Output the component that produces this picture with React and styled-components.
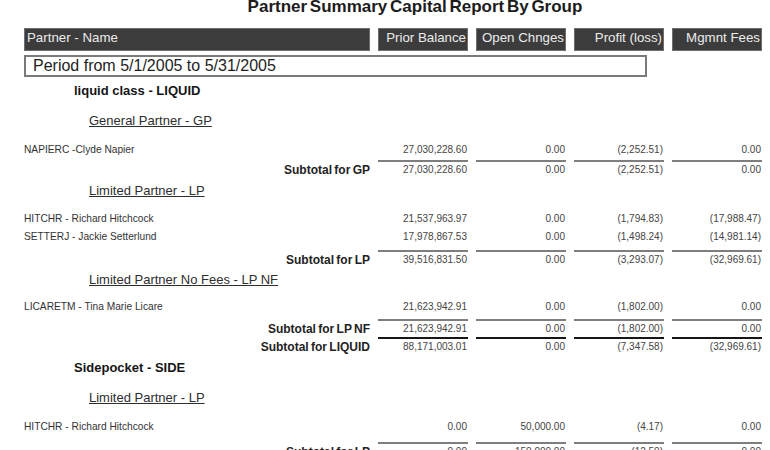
import React from "react";
import styled, { createGlobalStyle } from "styled-components";

const GlobalStyle = createGlobalStyle`
  body {
    margin: 0;
    background: #ffffff;
    font-family: "Liberation Sans", Arial, sans-serif;
  }
`;

const columns = ["Prior Balance", "Open Chnges", "Profit (loss)", "Mgmnt Fees"];

// report lines, heights in px so the rows land where the printed report puts them
const rows = [
  { type: "class", text: "liquid class - LIQUID", h: 32 },
  { type: "group", text: "General Partner - GP", h: 31 },
  { type: "detail", name: "NAPIERC -Clyde Napier", values: ["27,030,228.60", "0.00", "(2,252.51)", "0.00"], h: 20 },
  { type: "sub", label: "Subtotal for GP", values: ["27,030,228.60", "0.00", "(2,252.51)", "0.00"], h: 19 },
  { type: "group", text: "Limited Partner - LP", h: 30 },
  { type: "detail", name: "HITCHR - Richard Hitchcock", values: ["21,537,963.97", "0.00", "(1,794.83)", "(17,988.47)"], h: 18 },
  { type: "detail", name: "SETTERJ - Jackie Setterlund", values: ["17,978,867.53", "0.00", "(1,498.24)", "(14,981.14)"], h: 23 },
  { type: "sub", label: "Subtotal for LP", values: ["39,516,831.50", "0.00", "(3,293.07)", "(32,969.61)"], h: 18 },
  { type: "group", text: "Limited Partner No Fees - LP NF", h: 29 },
  { type: "detail", name: "LICARETM - Tina Marie Licare", values: ["21,623,942.91", "0.00", "(1,802.00)", "0.00"], h: 22 },
  { type: "sub", label: "Subtotal for LP NF", values: ["21,623,942.91", "0.00", "(1,802.00)", "0.00"], h: 18 },
  { type: "sub", label: "Subtotal for LIQUID", values: ["88,171,003.01", "0.00", "(7,347.58)", "(32,969.61)"], h: 17, dark: true },
  { type: "class", text: "Sidepocket - SIDE", h: 32 },
  { type: "group", text: "Limited Partner - LP", h: 31 },
  { type: "detail", name: "HITCHR - Richard Hitchcock", values: ["0.00", "50,000.00", "(4.17)", "0.00"], h: 25 },
  { type: "sub", label: "Subtotal for LP", values: ["0.00", "150,000.00", "(12.50)", "0.00"], h: 18 },
];

function App() {
  return (
    <>
      <GlobalStyle />
      <Page>
        <Title>Partner Summary Capital Report By Group</Title>
        <Row $h={23}>
          <HeadCell $left>Partner - Name</HeadCell>
          {columns.map((c) => (
            <HeadCell key={c}>{c}</HeadCell>
          ))}
        </Row>
        <Period>Period from 5/1/2005 to 5/31/2005</Period>

        {rows.map((r, i) => {
          if (r.type === "class") return <ClassLine key={i} $h={r.h}>{r.text}</ClassLine>;
          if (r.type === "group") return <GroupLine key={i} $h={r.h}><span>{r.text}</span></GroupLine>;
          if (r.type === "detail")
            return (
              <Row key={i} $h={r.h}>
                <Name>{r.name}</Name>
                {r.values.map((v, j) => (
                  <Num key={j}>{v}</Num>
                ))}
              </Row>
            );
          return (
            <Row key={i} $h={r.h}>
              <SubLabel>{r.label}</SubLabel>
              {r.values.map((v, j) => (
                <SubNum key={j} $dark={r.dark}>{v}</SubNum>
              ))}
            </Row>
          );
        })}
      </Page>
    </>
  );
}

const Page = styled.div`
  width: 770px;
  height: 450px;
  overflow: hidden;
  background: #ffffff;
`;

const Title = styled.h1`
  margin: -2px 0 0;
  padding-left: 60px;
  height: 30px;
  font-size: 17px;
  line-height: 17px;
  font-weight: bold;
  text-align: center;
  color: #1c1c1c;
  word-spacing: -2px;
`;

const Row = styled.div`
  display: grid;
  grid-template-columns: 346px repeat(4, 90px);
  column-gap: 8px;
  padding-left: 24px;
  height: ${(p) => p.$h}px;
`;

const HeadCell = styled.div`
  box-sizing: border-box;
  height: 23px;
  background: #3c3c3c;
  border: 1px solid #6f6f6f;
  color: #ececec;
  font-size: 13.3px;
  line-height: 18px;
  white-space: nowrap;
  overflow: hidden;
  text-align: ${(p) => (p.$left ? "left" : "right")};
  padding: ${(p) => (p.$left ? "0 0 0 2px" : "0 1px 0 0")};
`;

const Period = styled.div`
  box-sizing: border-box;
  margin: 4px 0 0 24px;
  width: 623px;
  height: 22px;
  border: 2px solid #7a7a7a;
  padding-left: 7px;
  font-size: 16px;
  line-height: 17px;
  color: #1e1e1e;
`;

const ClassLine = styled.div`
  height: ${(p) => p.$h}px;
  padding-left: 74px;
  font-size: 13px;
  font-weight: bold;
  line-height: 27px;
  color: #151515;
`;

const GroupLine = styled.div`
  height: ${(p) => p.$h}px;
  padding-left: 89px;
  font-size: 13px;
  line-height: 24px;
  color: #2e2e2e;
  span {
    text-decoration: underline;
  }
`;

const Name = styled.div`
  font-size: 10.2px;
  line-height: 19px;
  color: #333333;
  white-space: nowrap;
`;

const Num = styled.div`
  font-size: 10px;
  line-height: 19px;
  color: #444444;
  text-align: right;
  padding-right: 1px;
`;

const SubLabel = styled.div`
  padding-top: 2px;
  font-size: 12px;
  font-weight: bold;
  line-height: 16px;
  color: #222222;
  text-align: right;
  word-spacing: -1px;
`;

const SubNum = styled.div`
  border-top: 2px solid ${(p) => (p.$dark ? "#161616" : "#7e7e7e")};
  font-size: 10px;
  line-height: 16px;
  color: #444444;
  text-align: right;
  padding-right: 1px;
  align-self: start;
`;

export default App;
